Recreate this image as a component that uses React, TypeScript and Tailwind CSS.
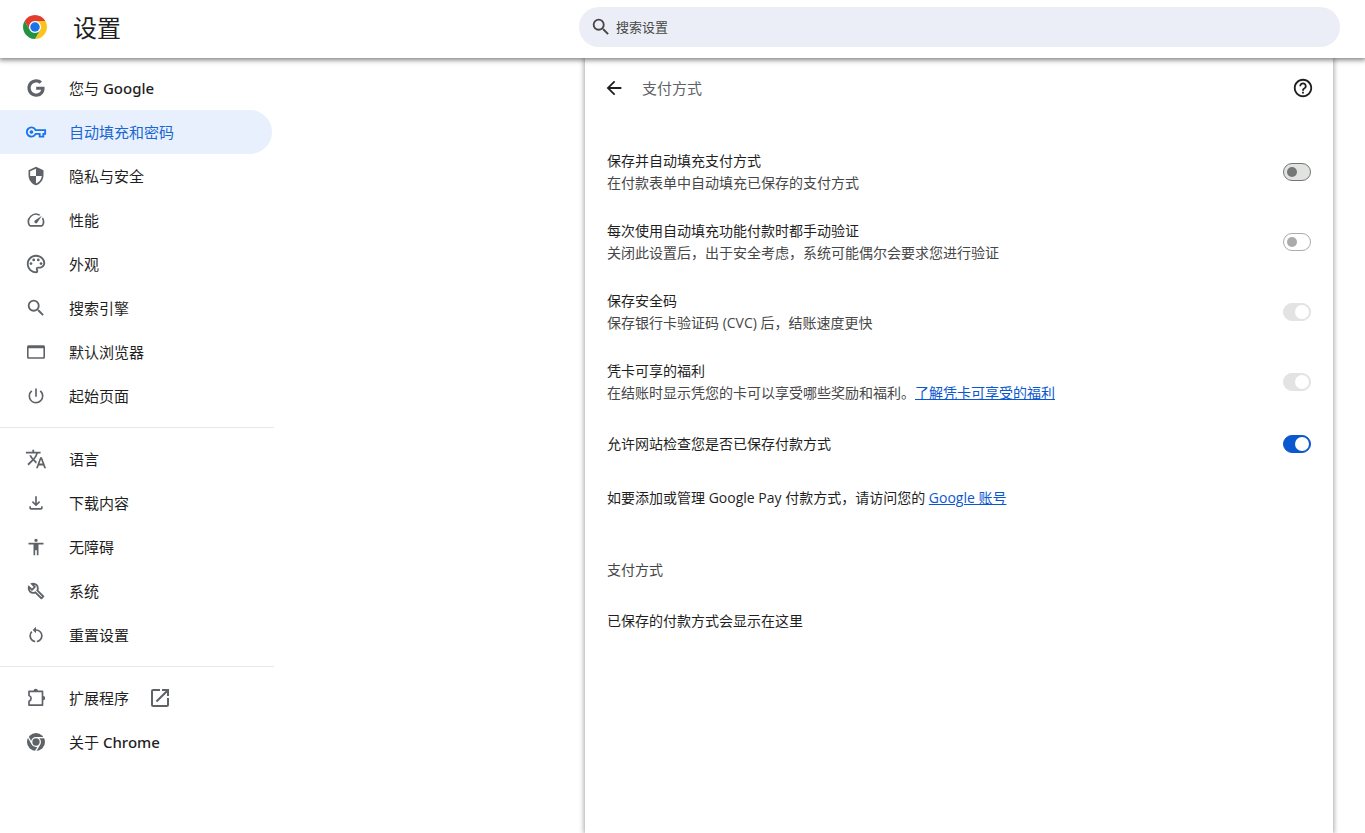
import { useState } from 'react';
import type { ReactNode } from 'react';
import {
  MdAccessibility,
  MdArrowBack,
  MdHelpOutline,
  MdOpenInNew,
  MdOutlinePalette,
  MdOutlineSpeed,
  MdPowerSettingsNew,
  MdRestartAlt,
  MdSearch,
  MdSecurity,
  MdTranslate,
} from 'react-icons/md';
import { FaGoogle } from 'react-icons/fa';
import { clsx } from 'clsx';

interface NavItem {
  id: string;
  label: string;
  brand?: string;
  icon: ReactNode;
  external?: boolean;
}

interface Setting {
  id: string;
  title: string;
  description?: string;
  link?: string;
  checked: boolean;
  disabled?: boolean;
}

function ChromeLogo() {
  return (
    <svg viewBox="0 0 48 48" className="size-6 shrink-0" aria-hidden="true">
      <circle cx="24" cy="24" r="13" fill="#fff" />
      <path fill="#e33b2e" d="M24 12H44.78A24 24 0 0 0 3.22 12L13.61 30A12 12 0 0 1 24 12Z" />
      <path fill="#fcc31e" d="M34.39 30L24 48A24 24 0 0 0 44.78 12H24A12 12 0 0 1 34.39 30Z" />
      <path fill="#229342" d="M13.61 30L3.22 12A24 24 0 0 0 24 48L34.39 30A12 12 0 0 1 13.61 30Z" />
      <circle cx="24" cy="24" r="9.5" fill="#1a73e8" />
    </svg>
  );
}

function ChromeMono() {
  return (
    <svg viewBox="0 0 48 48" className="size-[18px]" fill="currentColor" aria-hidden="true">
      <circle cx="24" cy="24" r="24" />
      <path
        fill="none"
        stroke="#fff"
        strokeWidth="3.5"
        d="M24 12.5H48M14 29.8L1.5 8M34 29.8L22 50M24 12.5A11.5 11.5 0 1 0 24 35.5A11.5 11.5 0 1 0 24 12.5"
      />
    </svg>
  );
}

function KeyIcon() {
  return (
    <svg viewBox="0 -960 960 960" className="size-[22px]" fill="currentColor" aria-hidden="true">
      <path d="M280-400q-33 0-56.500-23.500T200-480q0-33 23.500-56.500T280-560q33 0 56.500 23.500T360-480q0 33-23.500 56.500T280-400Zm0 160q-100 0-170-70T40-480q0-100 70-170t170-70q66 0 121 33t87 87h432v240h-80v120H600v-120H488q-32 54-87 87t-121 33Zm0-80q66 0 106-40.500t48-79.500h246v120h80v-120h80v-80H434q-8-39-48-79.500T280-640q-66 0-113 47t-47 113q0 66 47 113t113 47Z" />
    </svg>
  );
}

function BrowserIcon() {
  return (
    <svg viewBox="0 0 20 20" className="size-5" fill="currentColor" aria-hidden="true">
      <path
        fillRule="evenodd"
        d="M2.500 3.300H17.500A1.500 1.500 0 0 1 19 4.800V15.300A1.500 1.500 0 0 1 17.500 16.800H2.500A1.500 1.500 0 0 1 1 15.300V4.800A1.500 1.500 0 0 1 2.500 3.300ZM2.600 6.300V15.200H17.400V6.300Z"
      />
    </svg>
  );
}

function DownloadIcon() {
  return (
    <svg viewBox="0 -960 960 960" className="size-5" fill="currentColor" aria-hidden="true">
      <path d="M480-320 280-520l56-58 104 104v-326h80v326l104-104 56 58-200 200ZM240-160q-33 0-56.500-23.500T160-240v-80h80v80h480v-80h80v80q0 33-23.500 56.500T720-160H240Z" />
    </svg>
  );
}

function WrenchIcon() {
  return (
    <svg viewBox="0 -960 960 960" className="size-[22px]" fill="currentColor" aria-hidden="true">
      <path d="M686-132 444-376q-20 8-40.500 12t-43.500 4q-100 0-170-70t-70-170q0-36 10-68.500t28-61.500l146 146 72-72-146-146q29-18 61.500-28t68.500-10q100 0 170 70t70 170q0 23-4 43.500T584-516l244 242q12 12 12 29t-12 29l-84 84q-12 12-29 12t-29-12Zm29-85 27-27-256-256q18-20 26-46.500t8-53.500q0-60-38.500-104.500T386-758l74 74q12 12 12 28t-12 28L332-500q-12 12-28 12t-28-12l-74-74q9 57 53.500 95.500T360-440q26 0 52-8t47-25l256 256Z" />
    </svg>
  );
}

function ExtensionIcon() {
  return (
    <svg viewBox="0 0 20 20" className="size-5" fill="currentColor" aria-hidden="true">
      <path
        fill="none"
        stroke="currentColor"
        strokeWidth="1.7"
        strokeLinejoin="round"
        d="M3 3.400H16.500V17.100H3V13.200C5.800 12.200 5.800 8.500 3 7.500Z"
      />
      <path d="M7.500 3A2.200 2.200 0 0 1 11.900 3ZM17 7.900A2.200 2.200 0 0 1 17 12.300Z" />
    </svg>
  );
}

const navGroups: NavItem[][] = [
  [
    { id: 'people', label: '您与', brand: 'Google', icon: <FaGoogle size={18} /> },
    { id: 'autofill', label: '自动填充和密码', icon: <KeyIcon /> },
    { id: 'privacy', label: '隐私与安全', icon: <MdSecurity size={20} /> },
    { id: 'performance', label: '性能', icon: <MdOutlineSpeed size={20} /> },
    { id: 'appearance', label: '外观', icon: <MdOutlinePalette size={22} /> },
    { id: 'search', label: '搜索引擎', icon: <MdSearch size={22} /> },
    { id: 'browser', label: '默认浏览器', icon: <BrowserIcon /> },
    { id: 'startup', label: '起始页面', icon: <MdPowerSettingsNew size={20} /> },
  ],
  [
    { id: 'languages', label: '语言', icon: <MdTranslate size={22} /> },
    { id: 'downloads', label: '下载内容', icon: <DownloadIcon /> },
    { id: 'a11y', label: '无障碍', icon: <MdAccessibility size={20} /> },
    { id: 'system', label: '系统', icon: <WrenchIcon /> },
    { id: 'reset', label: '重置设置', icon: <MdRestartAlt size={20} /> },
  ],
  [
    { id: 'extensions', label: '扩展程序', icon: <ExtensionIcon />, external: true },
    { id: 'about', label: '关于', brand: 'Chrome', icon: <ChromeMono /> },
  ],
];

const initialSettings: Setting[] = [
  { id: 'save', title: '保存并自动填充支付方式', description: '在付款表单中自动填充已保存的支付方式', checked: false },
  {
    id: 'verify',
    title: '每次使用自动填充功能付款时都手动验证',
    description: '关闭此设置后，出于安全考虑，系统可能偶尔会要求您进行验证',
    checked: false,
    disabled: true,
  },
  { id: 'cvc', title: '保存安全码', description: '保存银行卡验证码 (CVC) 后，结账速度更快', checked: true, disabled: true },
  {
    id: 'benefits',
    title: '凭卡可享的福利',
    description: '在结账时显示凭您的卡可以享受哪些奖励和福利。',
    link: '了解凭卡可享受的福利',
    checked: true,
    disabled: true,
  },
  { id: 'check', title: '允许网站检查您是否已保存付款方式', checked: true },
];

function SettingRow({ setting, onToggle }: { setting: Setting; onToggle: (id: string) => void }) {
  const { id, title, description, link, checked, disabled } = setting;

  return (
    <div className={clsx('flex items-center justify-between gap-4', description ? 'h-[70px]' : 'h-[54px]')}>
      <div className="leading-[22px]">
        <label htmlFor={id} className="block">{title}</label>
        {description && (
          <p className="text-[#474747]">
            {description}
            {link && <a href="#benefits" className="text-[#0b57d0] underline">{link}</a>}
          </p>
        )}
      </div>
      <input
        id={id}
        type="checkbox"
        role="switch"
        checked={checked}
        disabled={disabled}
        onChange={() => onToggle(id)}
        className={clsx(
          'flex h-[18px] w-7 shrink-0 appearance-none items-center rounded-full border before:rounded-full',
          checked ? 'justify-end px-px before:size-[14px] before:bg-white' : 'px-[3px] before:size-[10px]',
          checked && (disabled ? 'border-[#e3e3e3] bg-[#e3e3e3]' : 'border-[#0b57d0] bg-[#0b57d0]'),
          !checked && (disabled ? 'border-[#ababab] before:bg-[#ababab]' : 'border-[#747775] bg-[#e1e3e1] before:bg-[#747775]')
        )}
      />
    </div>
  );
}

export default function App() {
  const [settings, setSettings] = useState(initialSettings);

  const toggle = (id: string) =>
    setSettings((prev) => prev.map((s) => (s.id === id ? { ...s, checked: !s.checked } : s)));

  return (
    <div className="flex h-screen flex-col overflow-hidden bg-white font-['Open_Sans','Noto_Sans_CJK_SC',sans-serif] text-sm text-[#1f1f1f]">
      <header className="z-10 flex h-[58px] shrink-0 items-center bg-white pr-[25px] pb-1 pl-[23px] shadow-[0_1px_5px_1px_rgba(0,0,0,0.5)]">
        <ChromeLogo />
        <h1 className="ml-[26px] pt-0.5 text-2xl">设置</h1>
        <div className="flex flex-1 justify-end pl-8">
          <label className="flex h-10 w-full max-w-[761px] items-center gap-1 rounded-full bg-[#ebeef7] px-[11px] text-[#474747]">
            <MdSearch size={22} />
            <input
              type="search"
              aria-label="搜索设置"
              placeholder="搜索设置"
              className="min-w-0 flex-1 bg-transparent text-[13px] outline-none placeholder:text-[#474747]"
            />
          </label>
        </div>
      </header>

      <div className="flex min-h-0 flex-1">
        <nav className="w-[274px] shrink-0 pt-2">
          {navGroups.map((group, i) => (
            <ul key={i} className={clsx(i > 0 && 'mt-[9px] border-t border-[#e8e8e8] pt-[9px]')}>
              {group.map((item) => (
                <li key={item.id}>
                  <a
                    href={`#${item.id}`}
                    className={clsx(
                      'mr-0.5 flex h-11 items-center rounded-r-full pl-6 text-[15px]',
                      item.id === 'autofill' ? 'bg-[#e8f0fe] text-[#1967d2]' : 'text-[#1f1f1f]'
                    )}
                  >
                    <span
                      className={clsx(
                        'flex w-6 justify-center',
                        item.id === 'autofill' ? 'text-[#1a73e8]' : 'text-[#5f6368]'
                      )}
                    >
                      {item.icon}
                    </span>
                    <span className="ml-[21px] pt-0.5">
                      {item.label}
                      {item.brand && (
                        <span className="font-['Noto_Sans',sans-serif] font-medium"> {item.brand}</span>
                      )}
                    </span>
                    {item.external && <MdOpenInNew size={24} className="ml-[19px] text-[#5f6368]" />}
                  </a>
                </li>
              ))}
            </ul>
          ))}
        </nav>

        <main className="flex flex-1 justify-end pr-8">
          <div className="w-full max-w-[748px] bg-white shadow-[0_0_5px_1px_rgba(0,0,0,0.35)]">
            <div className="flex h-[60px] items-center pr-[19px] pl-[18px]">
              <button type="button" aria-label="返回">
                <MdArrowBack size={22} />
              </button>
              <h2 className="ml-[17px] flex-1 pt-0.5 text-[15px] text-[#5f6368]">支付方式</h2>
              <button type="button" aria-label="帮助">
                <MdHelpOutline size={22} />
              </button>
            </div>

            <div className="px-[22px] pt-[19px]">
              {settings.map((s) => (
                <SettingRow key={s.id} setting={s} onToggle={toggle} />
              ))}
              <p className="flex h-[54px] items-center">
                <span>
                  如要添加或管理 Google Pay 付款方式，请访问您的{' '}
                  <a href="#account" className="text-[#0b57d0] underline">Google 账号</a>
                </span>
              </p>
              <h3 className="mt-8 leading-[26px] text-[#474747]">支付方式</h3>
              <p className="mt-[25px] leading-[26px]">已保存的付款方式会显示在这里</p>
            </div>
          </div>
        </main>
      </div>
    </div>
  );
}
